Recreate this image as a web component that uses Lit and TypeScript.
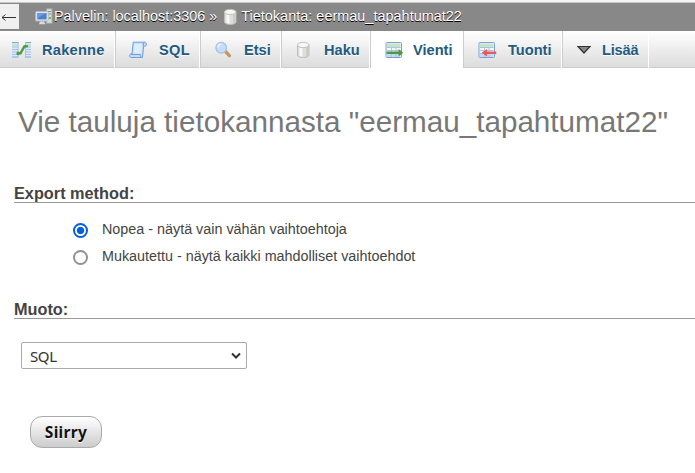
import { LitElement, html, css, svg } from "lit";
import { customElement, state } from "lit/decorators.js";
import { classMap } from "lit/directives/class-map.js";

const sheet = svg`
  <rect x="1" y="1.5" width="15.5" height="15" rx="1" fill="#f4f8fd" stroke="#7a9fd6"/>
  <rect x="2" y="2.5" width="13.5" height="3.5" fill="#c8e3bf"/>
  <rect x="2" y="12.5" width="13.5" height="3.5" fill="#c3d9f5"/>
  <path d="M2 6.5H15.5M2 9.5H15.5M2 12.5H15.5M6.5 6V16M11 6V16" stroke="#a9c4e8" fill="none"/>`;

const icons: Record<string, unknown> = {
  server: svg`
    <rect x="11.5" y="0.8" width="5.5" height="14.4" fill="#dcdedb" stroke="#a2a8a2"/>
    <path d="M13 3.5H16M13 6H16" stroke="#7f8a80"/>
    <rect x="14" y="9" width="2" height="2" fill="#67b84e"/>
    <rect x="0.7" y="3.5" width="12.6" height="9.5" rx="1" fill="#dfe5ea" stroke="#b4babf"/>
    <rect x="2.4" y="5" width="9.2" height="6.4" fill="#4b82cd"/>
    <path d="M2.4 5H11.6L2.4 10Z" fill="#6c9be0"/>
    <path d="M5 13.4H9L10.5 16.2H3.8Z" fill="#d8dadc"/>`,
  database: svg`
    <path d="M2.5 4V14C2.5 17.3 14 17.3 14 14V4Z" fill="#dededc" stroke="#bcbcba"/>
    <path d="M4.4 6V14.5C5.4 15.4 6.4 15.6 7.4 15.7V7Z" fill="#f8f8f8"/>
    <path d="M11.2 7V15.5L13.2 14.5V5Z" fill="#c9c9c7"/>
    <ellipse cx="8.25" cy="4" rx="5.75" ry="2.6" fill="#f6f6f5" stroke="#c2c2c0"/>`,
  structure: svg`
    <rect x="0" y="1" width="6.5" height="15.5" fill="#dce9f9"/>
    <rect x="0" y="2.5" width="5.5" height="2.5" fill="#c9e6c3"/>
    <path d="M0 1.5H6.5M0 16H6.5" stroke="#7fa8e0" fill="none"/>
    <path d="M0 6H6M0 8.5H6M0 11H6M0 13.5H6M6 1V16" stroke="#a3c1e9" fill="none"/>
    <rect x="13" y="1" width="6" height="15.5" fill="#dce9f9"/>
    <rect x="14" y="2.5" width="5" height="2.5" fill="#c9e6c3"/>
    <path d="M13 1.5H19M13 16H19" stroke="#7fa8e0" fill="none"/>
    <path d="M13.5 6H19M13.5 8.5H19M13.5 11H19M13.5 13.5H19M13.5 1V16" stroke="#a3c1e9" fill="none"/>
    <path d="M6 12.4H8.5L12.5 5.2H15" fill="none" stroke="#4f9d48" stroke-width="2.4" stroke-linejoin="round" stroke-linecap="round"/>
    <circle cx="6.2" cy="12.4" r="1.8" fill="#4f9d48"/>`,
  sql: svg`
    <path d="M4.2 1.2H15.5C18 1.2 18 5.2 15.8 5.2H14.6L13.5 16.5H2C0 16.5 0 13 2 13H3Z" fill="#c6defa" stroke="#6f9fdc" stroke-linejoin="round"/>
    <path d="M5.5 3H13L12.2 12.5H4.6Z" fill="#e0edfd"/>
    <path d="M2 13.5H11.5C10.9 14.5 11.4 16.3 13 16.5M14.6 5.2C13.8 4 14.2 2 15.5 1.2" fill="none" stroke="#6f9fdc"/>`,
  search: svg`
    <path d="M10.5 10.5L14.4 14.6" stroke="#c9965c" stroke-width="3.4" stroke-linecap="round"/>
    <circle cx="6.2" cy="6.7" r="5.3" fill="#c4def8" stroke="#a6c3e8" stroke-width="1.4"/>
    <path d="M2.9 6.5A3.4 3.4 0 0 1 6.2 3.2" fill="none" stroke="#eef6ff" stroke-width="1.5"/>`,
  export: svg`${sheet}
    <path d="M1.5 10.4H13.6V8L18.2 11.7L13.6 15.4V13H1.5Z" fill="#4b9b3e"/>`,
  import: svg`${sheet}
    <path d="M18.3 10.6H9V8L3.6 11.8L9 15.6V13H18.3Z" fill="#f25757"/>`,
  more: svg`<path d="M3 5.5H15L9 12Z" fill="#888" stroke="#333" stroke-width="1.2"/>`,
};

const icon = (name: string) =>
  html`<svg class="icon" viewBox="0 0 19 18" width="19" height="18">${icons[name]}</svg>`;

interface Tab { label: string; icon: string; cls: string; }

const TABS: Tab[] = [
  { label: "Rakenne", icon: "structure", cls: "w1" },
  { label: "SQL", icon: "sql", cls: "w2" },
  { label: "Etsi", icon: "search", cls: "w3" },
  { label: "Haku", icon: "database", cls: "w4" },
  { label: "Vienti", icon: "export", cls: "w5" },
  { label: "Tuonti", icon: "import", cls: "w6" },
  { label: "Lisää", icon: "more", cls: "w7" },
];

@customElement("app-root")
export class AppRoot extends LitElement {
  @state() private method = 0;

  static styles = css`
    :host {
      display: block;
      height: 473px;
      overflow: hidden;
      background: #fff;
      color: #444;
      font-family: "Liberation Sans", Arial, sans-serif;
      white-space: nowrap;
    }
    * { box-sizing: border-box; }
    .icon { display: block; flex: none; }
    .crumbs {
      display: flex;
      align-items: center;
      height: 31px;
      border-top: 2px solid #f4f4f4;
      background: #888;
      box-shadow: inset 0 1px #c9c9c9;
      color: #fff;
      font-size: 14.4px;
      text-shadow: 0 1px 0 #000;
    }
    .back {
      width: 19px;
      height: 25px;
      margin-right: 16px;
      background: #f0f0f0;
      display: flex;
      align-items: center;
    }
    .crumb { line-height: 20px; margin-top: -2px; }
    .crumb.db { letter-spacing: 0.04px; }
    .sep { width: 17px; padding-left: 4px; margin-top: -2px; }
    .tabs {
      display: flex;
      height: 37px;
      background: linear-gradient(#fff, #dcdcdc);
      border-bottom: 1px solid #ccc;
    }
    .tab {
      display: flex;
      align-items: center;
      height: 37px;
      padding-left: 14px;
      border-left: 1px solid #ccc;
      border-right: 1px solid #fff;
      color: #235a81;
      font-size: 14.6px;
      font-weight: bold;
      text-shadow: 0 1px 0 #fff;
    }
    .tab .icon { margin-right: 10px; }
    .tab.active { background: #fff; }
    .tab.w1 { width: 115px; padding-left: 12px; border-left: 0; letter-spacing: 0.25px; }
    .tab.w1 .icon { margin-right: 11px; }
    .tab.w2 { width: 85px; padding-left: 13px; letter-spacing: 0.3px; }
    .tab.w2 .icon { margin-right: 11px; }
    .tab.w3 { width: 81px; }
    .tab.w4 { width: 89px; padding-left: 13px; }
    .tab.w5 { width: 93px; }
    .tab.w5 .icon { margin-right: 9px; }
    .tab.w6 { width: 99px; }
    .tab.w6 .icon { margin-right: 11px; }
    .tab.w7 { width: 87px; padding-left: 12px; letter-spacing: -0.2px; }
    .tab.w7 .icon { margin-right: 8px; }
    h2 {
      margin: 0;
      padding: 36px 0 0 18px;
      color: #777;
      font-size: 29.65px;
      line-height: 36px;
      font-weight: normal;
    }
    section { margin-left: 14px; }
    h3 {
      margin: 0;
      height: 20px;
      border-bottom: 1px solid #999;
      font-size: 16.3px;
      line-height: 21px;
    }
    .method { margin-top: 43px; }
    .format { margin-top: 29px; }
    .options { padding: 13px 0 0 59px; }
    .option {
      display: flex;
      align-items: center;
      height: 27px;
      font-size: 14.35px;
    }
    .option .text { margin-top: -2px; }
    .radio {
      width: 15px;
      height: 15px;
      margin: 2px 14px 0 0;
      border: 2px solid #8f8f9d;
      border-radius: 50%;
      background: #fff;
    }
    .radio.on {
      border-color: #0060df;
      background: radial-gradient(circle, #0060df 0 3.3px, #fff 4.1px);
    }
    .select {
      display: flex;
      align-items: center;
      justify-content: space-between;
      width: 226px;
      height: 27px;
      margin: 23px 0 0 7px;
      padding: 0 5px 0 8px;
      border: 1px solid #aaa;
      border-radius: 2px;
      color: #333;
      font: 15px "Noto Sans", sans-serif;
      letter-spacing: -0.4px;
    }
    .go {
      width: 72px;
      height: 32px;
      margin: 47px 0 0 16px;
      padding: 0;
      border: 1px solid #aaa;
      border-radius: 12px;
      background: linear-gradient(#fff, #ccc);
      color: #111;
      font: bold 15.5px "Noto Sans", sans-serif;
      letter-spacing: 0.3px;
      text-shadow: 0 1px 0 #fff;
      display: block;
    }
  `;

  render() {
    return html`
      <nav class="crumbs">
        <span class="back">
          <svg width="19" height="12" viewBox="0 0 19 12">
            <path d="M2 6.5H16M5.5 3.5L2 6.5L5.5 9.5" fill="none" stroke="#333" stroke-width="1"/>
          </svg>
        </span>
        ${icon("server")}
        <span class="crumb">Palvelin: localhost:3306</span>
        <span class="sep">»</span>
        ${icon("database")}
        <span class="crumb db">Tietokanta: eermau_tapahtumat22</span>
      </nav>
      <div class="tabs">
        ${TABS.map((t) => html`
          <a class=${classMap({ tab: true, [t.cls]: true, active: t.icon === "export" })}>
            ${icon(t.icon)}<span>${t.label}</span>
          </a>`)}
      </div>
      <h2>Vie tauluja tietokannasta "eermau_tapahtumat22"</h2>
      <section class="method">
        <h3>Export method:</h3>
        <div class="options">
          ${["Nopea - näytä vain vähän vaihtoehtoja", "Mukautettu - näytä kaikki mahdolliset vaihtoehdot"].map(
            (text, i) => html`
              <div class="option" @click=${() => (this.method = i)}>
                <span class=${classMap({ radio: true, on: this.method === i })}></span>
                <span class="text">${text}</span>
              </div>`
          )}
        </div>
      </section>
      <section class="format">
        <h3>Muoto:</h3>
        <div class="select">
          <span>SQL</span>
          <svg width="10" height="8" viewBox="0 0 10 8">
            <path d="M1 1.5L5 5.5L9 1.5" fill="none" stroke="#333" stroke-width="2"/>
          </svg>
        </div>
        <button class="go">Siirry</button>
      </section>
    `;
  }
}
